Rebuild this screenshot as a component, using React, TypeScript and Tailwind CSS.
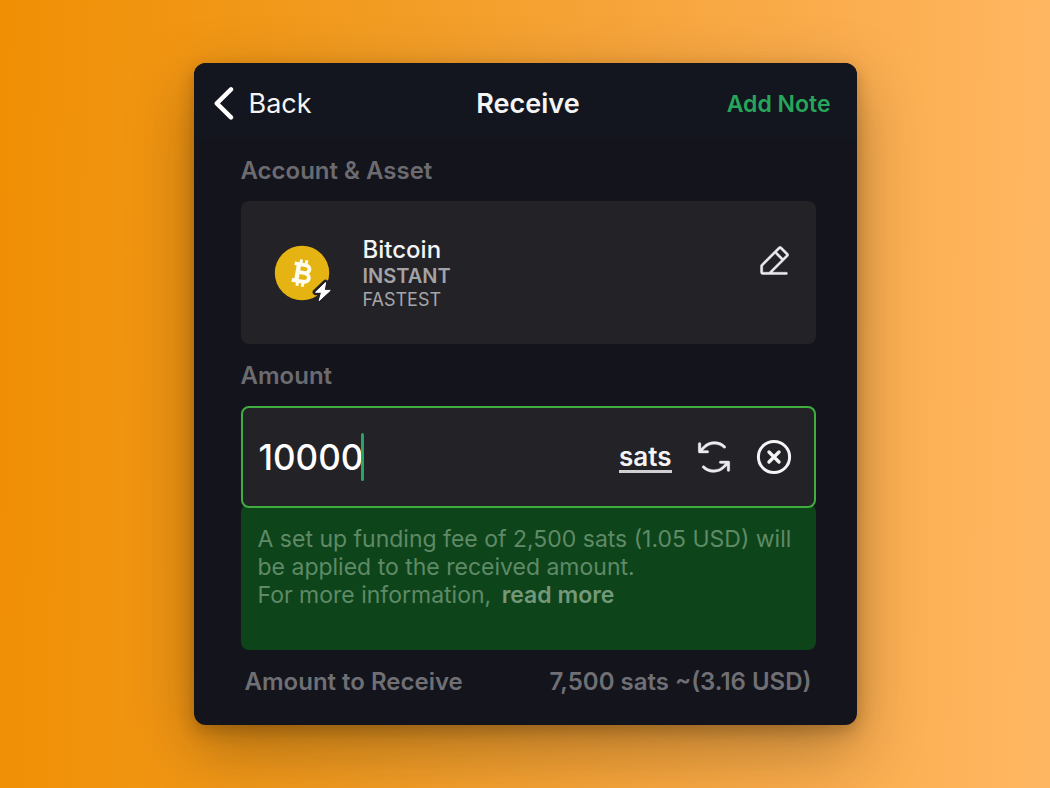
import { useState } from "react";
import { PiArrowsCounterClockwise, PiPencilSimpleLine } from "react-icons/pi";

function BitcoinBadge() {
  return (
    <svg viewBox="0 0 58 58" className="size-[58px] shrink-0" aria-hidden="true">
      <circle cx="28" cy="29" r="27.2" fill="#e6b412" />
      <g transform="translate(27.6 29) rotate(10)" fill="none" stroke="#fffdf0" strokeWidth="3.8">
        <path d="M-8.5 -8.4H2.2C8.8 -8.4 8.8 -0.4 2.2 -0.4H-4M2.2 -0.4C10 -0.4 10 8.4 2.6 8.4H-8.5" strokeLinejoin="round" />
        <path d="M-4 -9V9" strokeWidth="4.4" />
        <path d="M-2.4 -13.4V-8M3 -13.4V-8M-2.4 8V13.4M3 8V13.4" strokeWidth="3" />
      </g>
      <path
        d="M51.6 38.6 41.6 48.2H47.6L45.2 56.6 56.2 46.4H50.2Z"
        fill="#fff"
        stroke="#232227"
        strokeWidth="6"
        strokeLinejoin="round"
        paintOrder="stroke"
      />
      <path
        d="M51.6 38.6 41.6 48.2H47.6L45.2 56.6 56.2 46.4H50.2Z"
        fill="#fff"
        stroke="#fff"
        strokeWidth="1"
        strokeLinejoin="round"
      />
    </svg>
  );
}

function Header() {
  return (
    <header className="grid h-[76px] grid-cols-[1fr_auto_1fr] items-center bg-[#13161e] pr-[26px] pl-5 pt-[5px]">
      <button type="button" className="flex items-center gap-[15px] justify-self-start text-[27px] leading-8 text-[#f4f4f5]">
        <svg viewBox="0 0 20 34" className="h-[34px] w-5" fill="none" stroke="#fff" strokeWidth="4.4" strokeLinecap="round" strokeLinejoin="round" aria-hidden="true">
          <path d="M17 2.4 2.8 16.4l14.2 14" />
        </svg>
        Back
      </button>
      <h1 className="pl-3 text-[27px] leading-8 font-semibold text-[#f4f4f5]">Receive</h1>
      <button type="button" className="justify-self-end text-[23px] leading-8 font-semibold text-[#27a55b]">
        Add Note
      </button>
    </header>
  );
}

export default function App() {
  const [amount, setAmount] = useState("10000");

  return (
    <main className="grid min-h-screen place-items-center bg-[linear-gradient(91deg,#f08f04_0%,#f29c22_35%,#f7a53c_60%,#ffb660_98%)] font-['Inter',sans-serif]">
      <div className="w-full max-w-[663px] overflow-hidden rounded-xl bg-[#14141d] shadow-[0_6px_16px_rgba(40,25,0,0.25),0_24px_64px_rgba(40,25,0,0.35)]">
        <Header />
        <div className="pr-[41px] pb-[27px] pl-[47px]">
          <h2 className="pt-4 pb-[14px] text-[24px] leading-8 font-semibold text-[#6b6b70]">Account &amp; Asset</h2>
          <section className="flex h-[143px] items-center rounded-lg bg-[#232227] pr-6 pl-[33px]">
            <BitcoinBadge />
            <div className="ml-[31px] flex-1 pt-0.5">
              <p className="text-[24px] leading-7 font-medium text-[#f4f4f5]">Bitcoin</p>
              <p className="text-[20px] leading-6 font-semibold text-[#a3a3a6]">INSTANT</p>
              <p className="text-[18px] leading-6 text-[#a6a6a9]">FASTEST</p>
            </div>
            <button type="button" aria-label="Edit account" className="mb-6 text-[#ececee]">
              <PiPencilSimpleLine className="size-9" stroke="currentColor" strokeWidth={3} />
            </button>
          </section>

          <label htmlFor="amount" className="block pt-4 pb-[14px] text-[24px] leading-8 font-semibold text-[#6b6b70]">
            Amount
          </label>
          <div className="relative flex h-[102px] items-center rounded-lg border-2 border-[#3fae3f] bg-[#232227] pr-[22px] pl-4">
            <div className="flex flex-1 items-center">
              <input
                id="amount"
                inputMode="numeric"
                value={amount}
                onChange={(e) => setAmount(e.target.value)}
                className="field-sizing-content bg-transparent text-[35px] leading-[44px] font-medium text-white caret-transparent outline-none"
              />
              <span className="-ml-0.5 h-12 w-[3px] rounded-full bg-[#27a565]" />
            </div>
            <button type="button" className="border-b-[3px] border-[#d0d0d2] pt-0.5 text-[26px] leading-[26px] font-semibold text-[#f4f4f5]">
              sats
            </button>
            <button type="button" aria-label="Switch currency" className="ml-[21px] text-[#ececee]">
              <PiArrowsCounterClockwise className="size-[42px]" stroke="currentColor" strokeWidth={2} />
            </button>
            <button type="button" aria-label="Clear amount" onClick={() => setAmount("")} className="ml-[21px]">
              <svg viewBox="0 0 36 36" className="size-9" fill="none" stroke="#f4f4f5" strokeWidth="3" strokeLinecap="round" aria-hidden="true">
                <circle cx="18" cy="18" r="15.6" />
                <path d="m13 13 10 10M23 13 13 23" strokeWidth="3.4" />
              </svg>
            </button>
          </div>
          <p className="-mt-1 h-[146px] rounded-lg bg-[#0e441a] px-[17px] pt-[21px] text-[23px] leading-[28px] text-[#5f8a67]">
            A set up funding fee of 2,500 sats (1.05 USD) will be applied to the received amount.
            <br />
            For more information,{" "}
            <a href="#fees" className="ml-1 font-semibold text-[#74997a]">
              read more
            </a>
          </p>
          <div className="flex justify-between pt-4 pr-1 pl-1 text-[24px] leading-8 font-semibold text-[#6f6f74]">
            <span>Amount to Receive</span>
            <span>7,500 sats ~(3.16 USD)</span>
          </div>
        </div>
      </div>
    </main>
  );
}
